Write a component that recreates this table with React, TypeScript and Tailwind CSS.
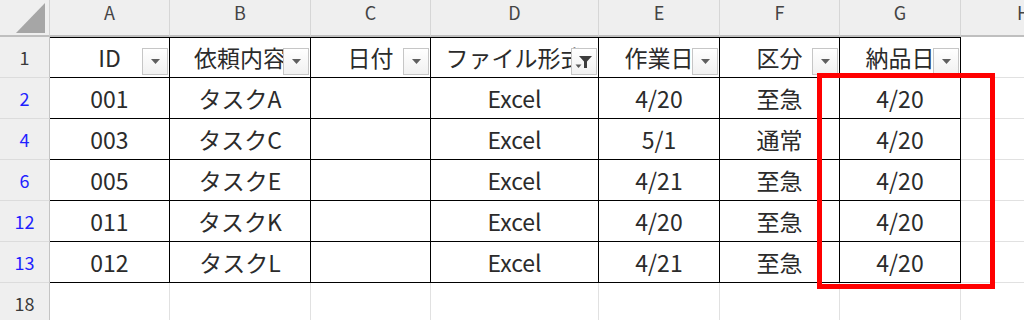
import React from "react";

type Col = { key: string; width: string };

const columns: Col[] = [
  { key: "A", width: "w-[120px]" },
  { key: "B", width: "w-[141px]" },
  { key: "C", width: "w-[120px]" },
  { key: "D", width: "w-[168px]" },
  { key: "E", width: "w-[121px]" },
  { key: "F", width: "w-[120px]" },
  { key: "G", width: "w-[121px]" },
];

const headers = ["ID", "依頼内容", "日付", "ファイル形式", "作業日", "区分", "納品日"];

const rows = [
  { no: 2, cells: ["001", "タスクA", "", "Excel", "4/20", "至急", "4/20"] },
  { no: 4, cells: ["003", "タスクC", "", "Excel", "5/1", "通常", "4/20"] },
  { no: 6, cells: ["005", "タスクE", "", "Excel", "4/21", "至急", "4/20"] },
  { no: 12, cells: ["011", "タスクK", "", "Excel", "4/20", "至急", "4/20"] },
  { no: 13, cells: ["012", "タスクL", "", "Excel", "4/21", "至急", "4/20"] },
];

const FilterButton = ({ active }: { active?: boolean }) => (
  <span className="absolute right-[1px] bottom-[2px] flex h-[27px] w-[26px] items-center justify-center border border-[#c6c6c6] bg-linear-to-b from-white to-[#f1f1f1]">
    {active ? (
      <svg width="18" height="14" viewBox="0 0 18 14">
        <path d="M4 1h13l-5 5.5V13h-3V6.5z" fill="#3c3c3c" />
        <path d="M0.5 9.5h6L3.5 13z" fill="#5a5a5a" />
      </svg>
    ) : (
      <svg width="9" height="5" viewBox="0 0 9 5">
        <path d="M0 0h9L4.5 5z" fill="#5f5f5f" />
      </svg>
    )}
  </span>
);

const RowHead = ({ label, blue }: { label: string; blue?: boolean }) => (
  <div
    className={`flex w-[50px] shrink-0 items-center justify-center border-r border-b border-r-[#c4c4c4] border-b-[#dcdcdc] bg-[#efefef] text-[18px] ${
      blue ? "text-[#1f1fff]" : "text-[#3a3a3a]"
    }`}
  >
    {label}
  </div>
);

export default function App() {
  return (
    <div className="relative h-[320px] w-[1024px] overflow-hidden bg-white font-['Noto_Sans_CJK_JP','Noto_Sans',sans-serif] text-[#2b2b2b]">
      {/* column letters */}
      <div className="flex h-[37px]">
        <div className="w-[50px] shrink-0 border-r border-b-2 border-r-[#d2d2d2] border-b-[#bfbfbf] bg-[#efefef]">
          <svg width="49" height="35" viewBox="0 0 49 35">
            <polygon points="45,3 45,33 16,33" fill="#a6a6a6" />
          </svg>
        </div>
        {columns.map((c) => (
          <div
            key={c.key}
            className={`${c.width} shrink-0 border-r border-b-2 border-r-[#d6d6d6] border-b-[#bfbfbf] bg-[#efefef] text-center text-[18px] leading-[25px] text-[#444]`}
          >
            {c.key}
          </div>
        ))}
        <div className="flex-1 border-b-2 border-b-[#bfbfbf] bg-[#efefef] pl-[56px] text-[18px] leading-[25px] text-[#444]">
          H
        </div>
      </div>

      {/* filter header row */}
      <div className="flex h-[41px]">
        <RowHead label="1" />
        {columns.map((c, i) => (
          <div
            key={c.key}
            className={`${c.width} relative flex shrink-0 items-center justify-center overflow-hidden whitespace-nowrap border-t border-r border-b border-black text-[23px]`}
          >
            {headers[i]}
            <FilterButton active={c.key === "D"} />
          </div>
        ))}
        <div className="flex-1 border-b border-[#e1e1e1]" />
      </div>

      {/* filtered data rows */}
      {rows.map((r) => (
        <div key={r.no} className="flex h-[41px]">
          <RowHead label={String(r.no)} blue />
          {columns.map((c, i) => (
            <div
              key={c.key}
              className={`${c.width} flex shrink-0 items-center justify-center whitespace-nowrap border-r border-b border-black text-[23px]`}
            >
              {r.cells[i]}
            </div>
          ))}
          <div className="flex-1 border-b border-[#e1e1e1]" />
        </div>
      ))}

      <div className="flex h-[41px]">
        <RowHead label="18" />
        {columns.map((c) => (
          <div key={c.key} className={`${c.width} shrink-0 border-r border-b border-[#e1e1e1]`} />
        ))}
        <div className="flex-1 border-b border-[#e1e1e1]" />
      </div>

      {/* highlight around the delivery date column */}
      <div className="absolute top-[73px] left-[817px] h-[216px] w-[178px] border-[5px] border-[#ff0000]" />
    </div>
  );
}
